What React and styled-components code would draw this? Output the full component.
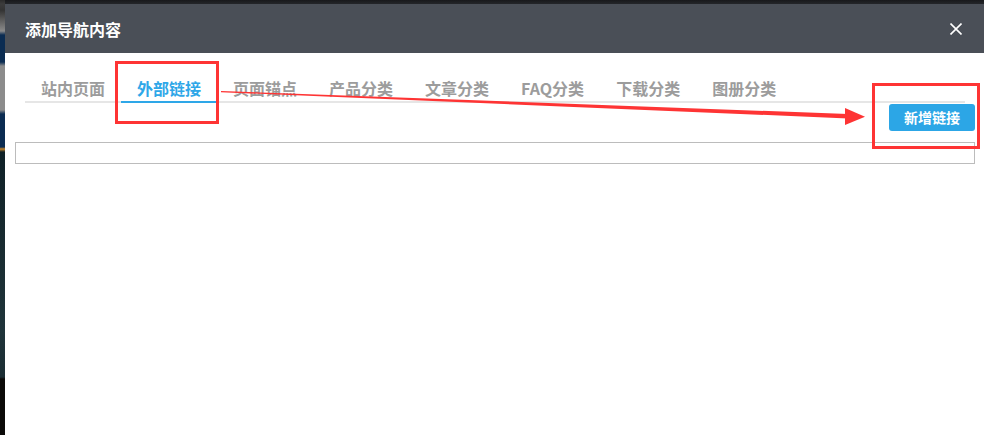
import React from "react";
import styled, { createGlobalStyle } from "styled-components";

const tabs = ["站内页面", "外部链接", "页面锚点", "产品分类", "文章分类", "FAQ分类", "下载分类", "图册分类"];

const GlobalStyle = createGlobalStyle`
  html, body {
    margin: 0;
    padding: 0;
    background: #1f2023;
    overflow: hidden;
  }
  body {
    font-family: "Noto Sans CJK SC", "Noto Sans", sans-serif;
  }
`;

const Page = styled.div`
  position: relative;
  display: flex;
  width: 984px;
  height: 435px;
  overflow: hidden;
  background: linear-gradient(#18191c, #24262a 4px);
`;

const BackStrip = styled.div`
  flex: 0 0 5px;
  background: linear-gradient(
    #2c2c2c 0px,
    #3c3c3c 4px,
    #333 10px,
    #8a8a8a 31px,
    #0b2c52 35px,
    #0b2c52 62px,
    #8c8c8c 66px,
    #8c8c8c 110px,
    #0b2c52 114px,
    #0b2c52 147px,
    #c7862b 149px,
    #0f2127 152px,
    #17292f 230px,
    #1f343a 330px,
    #1b2d33 377px,
    #0b0a08 379px
  );
`;

const Modal = styled.div`
  flex: 0 0 980px;
  margin-top: 4px;
  background: #fff;
  display: flex;
  flex-direction: column;
`;

const Header = styled.div`
  height: 49px;
  background: #4a4f57;
  display: flex;
  align-items: center;
  justify-content: space-between;
  padding: 0 22px 0 20px;
`;

const Title = styled.h3`
  margin: 0;
  color: #fff;
  font-size: 16px;
  font-weight: 700;
  line-height: 20px;
`;

const Close = styled.button`
  border: none;
  background: none;
  padding: 0;
  width: 14px;
  height: 14px;
  display: flex;
  align-items: center;
  justify-content: center;
  cursor: pointer;
`;

const Body = styled.div`
  padding: 10px 10px 0;
`;

const TabNav = styled.div`
  display: flex;
  margin: 0 10px;
  border-bottom: 2px solid #e6e6e6;
`;

const Tab = styled.div`
  padding: 13px 16px 1px;
  margin-bottom: -2px;
  font-size: 16px;
  font-weight: 700;
  line-height: 24px;
  color: ${(p) => (p.$active ? "#2ea7e8" : "#9c9c9c")};
  border-bottom: 2px solid ${(p) => (p.$active ? "#2ea7e8" : "transparent")};
  white-space: nowrap;
`;

const Toolbar = styled.div`
  display: flex;
  justify-content: flex-end;
  margin-top: 1px;
`;

const AddButton = styled.button`
  height: 27px;
  padding: 0 15px;
  border: none;
  border-radius: 3px;
  background: #2ca6e6;
  color: #fff;
  font-family: inherit;
  font-size: 14px;
  font-weight: 700;
  line-height: 27px;
`;

const LinkInput = styled.input`
  display: block;
  box-sizing: border-box;
  width: 100%;
  height: 22px;
  margin-top: 11px;
  border: 1px solid #bcbcbc;
  outline: none;
`;

const Mark = styled.div`
  position: absolute;
  left: ${(p) => p.$x}px;
  top: ${(p) => p.$y}px;
  width: ${(p) => p.$w}px;
  height: ${(p) => p.$h}px;
  box-sizing: border-box;
  border: 3px solid #fe3434;
  pointer-events: none;
`;

const ArrowLayer = styled.svg`
  position: absolute;
  left: 0;
  top: 0;
  pointer-events: none;
`;

export default function App() {
  return (
    <Page>
      <GlobalStyle />
      <BackStrip />
      <Modal>
        <Header>
          <Title>添加导航内容</Title>
          <Close aria-label="close">
            <svg width="12" height="12" viewBox="0 0 12 12">
              <path d="M0.5 0.5 L11.5 11.5 M11.5 0.5 L0.5 11.5" stroke="#fff" strokeWidth="1.6" />
            </svg>
          </Close>
        </Header>
        <Body>
          <TabNav>
            {tabs.map((t, i) => (
              <Tab key={t} $active={i === 1}>{t}</Tab>
            ))}
          </TabNav>
          <Toolbar>
            <AddButton>新增链接</AddButton>
          </Toolbar>
          <LinkInput />
        </Body>
      </Modal>

      <Mark $x={115} $y={61} $w={104} $h={63} />
      <Mark $x={872} $y={83} $w={108} $h={66} />
      <ArrowLayer width="984" height="435" viewBox="0 0 984 435">
        <polygon points="221,91 221,92.2 848,118.4 848,114" fill="#fe3434" />
        <polygon points="845,108 865,116.7 845,125" fill="#fe3434" />
      </ArrowLayer>
    </Page>
  );
}
